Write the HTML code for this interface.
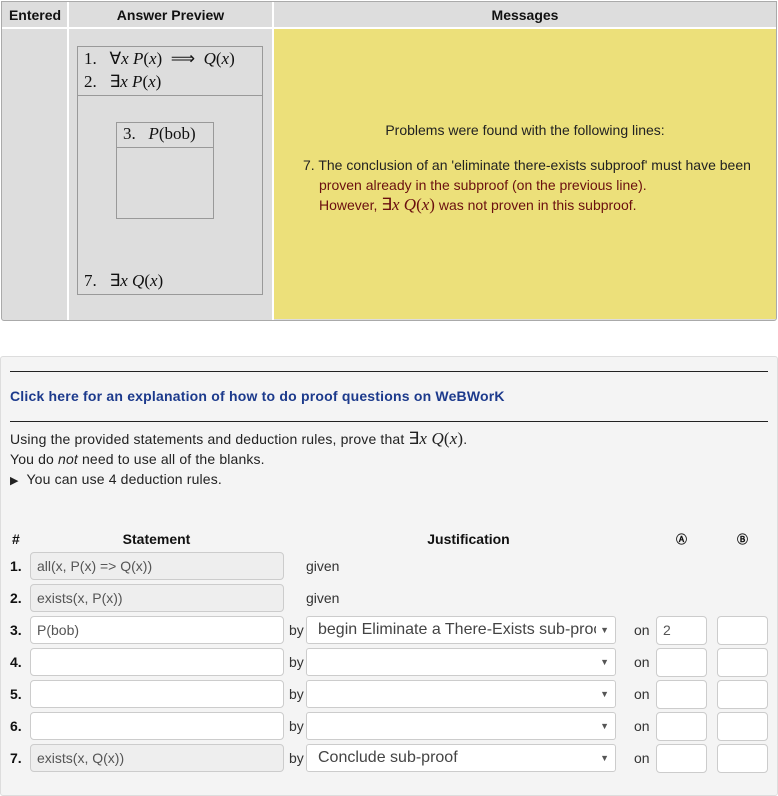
<!DOCTYPE html>
<html><head><style>
body{margin:0;width:778px;height:784px;background:#fff;font-family:"Liberation Sans",sans-serif;position:relative;overflow:hidden}
.a{position:absolute}
.m{font-family:"Liberation Serif",serif}
.m i{font-style:italic}
.hd{background:#ddd;font-weight:bold;font-size:14px;text-align:center;line-height:25px;color:#111}
.inp{position:absolute;height:26px;border:1px solid #ccc;border-radius:4px;background:#fff;font-size:14px;color:#555;line-height:26px;padding-left:6px;box-sizing:content-box}
.ro{background:#eee}
.sel{position:absolute;left:306px;width:310px;border:1px solid #ccc;border-radius:3px;background:#fff;font-size:16px;color:#444;line-height:26px;padding-left:11px;padding-right:24px;box-sizing:border-box;height:28px;overflow:hidden;white-space:nowrap}
.sel:after{content:"▼";position:absolute;right:6px;top:0;font-size:9px;color:#555;background:#fff;padding-left:4px}
.n{position:absolute;left:10px;font-weight:bold;font-size:14px;color:#111}
.t{position:absolute;font-size:14px;color:#333}
.bx{position:absolute;width:51px;height:29px;border:1px solid #ccc;border-radius:4px;background:#fff;box-sizing:border-box;font-size:14px;color:#555;padding-left:6px;line-height:27px}
</style></head><body>
<div class="a" style="left:1px;top:1px;width:776px;height:320px;border:1px solid #aaa;box-sizing:border-box;background:#ddd;border-radius:0 0 3px 3px"></div>
<div class="a hd" style="left:3px;top:3px;width:64px;height:25px">Entered</div>
<div class="a hd" style="left:69px;top:3px;width:203px;height:25px">Answer Preview</div>
<div class="a hd" style="left:274px;top:3px;width:502px;height:25px">Messages</div>
<div class="a" style="left:67px;top:2px;width:2px;height:318px;background:#fff"></div>
<div class="a" style="left:272px;top:2px;width:2px;height:318px;background:#fff"></div>
<div class="a" style="left:2px;top:27px;width:774px;height:2px;background:#fff"></div>
<div class="a" style="left:274px;top:29px;width:502px;height:290px;background:#ece07a"></div>
<div class="a" style="left:77px;top:46px;width:186px;height:249px;border:1px solid #999;box-sizing:border-box"></div>
<div class="a" style="left:77px;top:95px;width:186px;height:1px;background:#999"></div>
<div class="a m" style="left:84px;top:47px;font-size:17px;line-height:23px;color:#111;white-space:nowrap">1.&nbsp;&nbsp; ∀<i>x</i> <i>P</i>(<i>x</i>) &nbsp;⟹&nbsp; <i>Q</i>(<i>x</i>)<br>2.&nbsp;&nbsp; ∃<i>x</i> <i>P</i>(<i>x</i>)</div>
<div class="a" style="left:116px;top:122px;width:98px;height:97px;border:1px solid #999;box-sizing:border-box"></div>
<div class="a" style="left:116px;top:147px;width:98px;height:1px;background:#999"></div>
<div class="a m" style="left:123px;top:124px;font-size:17px;color:#111;white-space:nowrap">3.&nbsp;&nbsp; <i>P</i>(bob)</div>
<div class="a m" style="left:84px;top:271px;font-size:17px;color:#111;white-space:nowrap">7.&nbsp;&nbsp; ∃<i>x</i> <i>Q</i>(<i>x</i>)</div>
<div class="a" style="left:274px;top:122px;width:502px;text-align:center;font-size:14px;color:#222">Problems were found with the following lines:</div>
<div class="a" style="left:303px;top:155px;font-size:14px;line-height:20px;color:#222;white-space:nowrap">7. The conclusion of an 'eliminate there-exists subproof' must have been</div>
<div class="a" style="left:319px;top:175px;font-size:14px;line-height:20px;color:#6a0f0f;white-space:nowrap">proven already in the subproof (on the previous line).<br>However, <span class="m" style="font-size:17px">∃<i>x</i> <i>Q</i>(<i>x</i>)</span> was not proven in this subproof.</div>
<div class="a" style="left:0;top:356px;width:778px;height:440px;background:#f4f4f4;border:1px solid #ddd;box-sizing:border-box;border-radius:3px"></div>
<div class="a" style="left:10px;top:371px;width:758px;height:1px;background:#222"></div>
<div class="a" style="left:10px;top:388px;font-size:14px;font-weight:bold;color:#1c3a8c;letter-spacing:0.2px;white-space:nowrap">Click here for an explanation of how to do proof questions on WeBWorK</div>
<div class="a" style="left:10px;top:421px;width:758px;height:1px;background:#222"></div>
<div class="a" style="left:10px;top:429px;font-size:14px;line-height:20px;color:#222;white-space:nowrap;letter-spacing:0.15px">Using the provided statements and deduction rules, prove that <span class="m" style="font-size:17px">∃<i>x</i> <i>Q</i>(<i>x</i>)</span>.<br>You do <i>not</i> need to use all of the blanks.<br><span style="font-size:11px">▶</span>&nbsp; You can use 4 deduction rules.</div>
<div class="a" style="left:12px;top:531px;font-size:14px;font-weight:bold;color:#111">#</div>
<div class="a" style="left:30px;top:531px;width:253px;text-align:center;font-size:14px;font-weight:bold;color:#111">Statement</div>
<div class="a" style="left:306px;top:531px;width:325px;text-align:center;font-size:14px;font-weight:bold;color:#111">Justification</div>
<div class="a" style="left:676px;top:531px;font-size:11px;font-weight:bold;color:#111">Ⓐ</div>
<div class="a" style="left:737px;top:531px;font-size:11px;font-weight:bold;color:#111">Ⓑ</div>
<div class="n" style="top:558px">1.</div><div class="inp ro" style="left:30px;top:552px;width:246px">all(x, P(x) =&gt; Q(x))</div><div class="t" style="left:306px;top:558px">given</div>
<div class="n" style="top:590px">2.</div><div class="inp ro" style="left:30px;top:584px;width:246px">exists(x, P(x))</div><div class="t" style="left:306px;top:590px">given</div>
<div class="n" style="top:622px">3.</div><div class="inp" style="left:30px;top:616px;width:246px">P(bob)</div><div class="t" style="left:289px;top:622px">by</div><div class="sel" style="top:616px">begin Eliminate a There-Exists sub-proof</div><div class="t" style="left:634px;top:622px">on</div><div class="bx" style="left:656px;top:616px">2</div><div class="bx" style="left:717px;top:616px"></div>
<div class="n" style="top:654px">4.</div><div class="inp" style="left:30px;top:648px;width:246px"></div><div class="t" style="left:289px;top:654px">by</div><div class="sel" style="top:648px"></div><div class="t" style="left:634px;top:654px">on</div><div class="bx" style="left:656px;top:648px"></div><div class="bx" style="left:717px;top:648px"></div>
<div class="n" style="top:686px">5.</div><div class="inp" style="left:30px;top:680px;width:246px"></div><div class="t" style="left:289px;top:686px">by</div><div class="sel" style="top:680px"></div><div class="t" style="left:634px;top:686px">on</div><div class="bx" style="left:656px;top:680px"></div><div class="bx" style="left:717px;top:680px"></div>
<div class="n" style="top:718px">6.</div><div class="inp" style="left:30px;top:712px;width:246px"></div><div class="t" style="left:289px;top:718px">by</div><div class="sel" style="top:712px"></div><div class="t" style="left:634px;top:718px">on</div><div class="bx" style="left:656px;top:712px"></div><div class="bx" style="left:717px;top:712px"></div>
<div class="n" style="top:750px">7.</div><div class="inp ro" style="left:30px;top:744px;width:246px">exists(x, Q(x))</div><div class="t" style="left:289px;top:750px">by</div><div class="sel" style="top:744px">Conclude sub-proof</div><div class="t" style="left:634px;top:750px">on</div><div class="bx" style="left:656px;top:744px"></div><div class="bx" style="left:717px;top:744px"></div>
</body></html>
